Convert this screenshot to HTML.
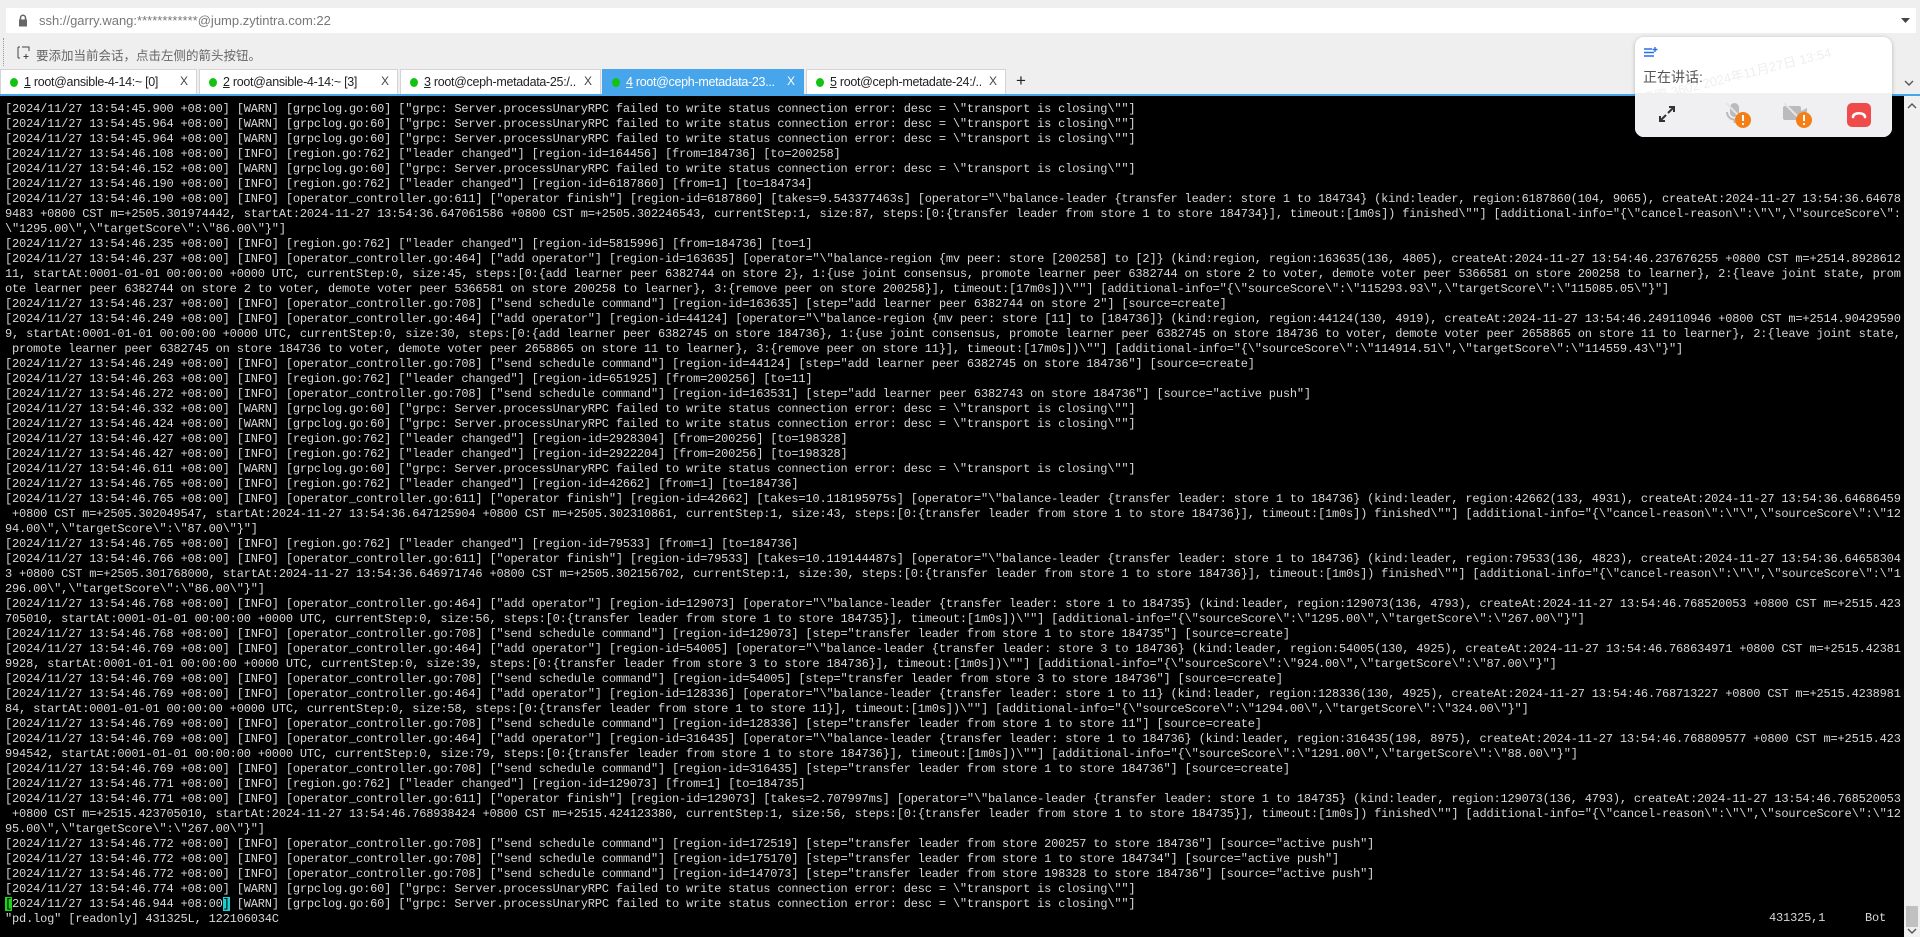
<!DOCTYPE html>
<html><head><meta charset="utf-8">
<style>
*{margin:0;padding:0;box-sizing:border-box}
body{width:1920px;height:937px;overflow:hidden;background:#efefef;font-family:"Liberation Sans","Noto Sans CJK SC",sans-serif;position:relative}
.addr{position:absolute;left:6px;top:8px;width:1910px;height:25px;background:#fff}
.addr .t{position:absolute;left:33px;top:5px;font-size:13px;color:#777}
.hint{position:absolute;left:36px;top:45px;font-size:12.5px;color:#666}
.tabs{position:absolute;left:0;top:69px;height:25px;width:1920px}
.tab{position:absolute;top:0;height:25px;background:#fff;border:1px solid #d4d4d4;border-bottom:none;font-size:12.5px;color:#222}
.tab .d{position:absolute;left:9px;top:8px;width:8px;height:9px;border-radius:50%;background:#12c312}
.tab .l{position:absolute;left:23px;right:24px;top:5px;white-space:nowrap;overflow:hidden;letter-spacing:-0.3px}
.tab .l u{text-decoration:underline}
.tab .x{position:absolute;right:8px;top:4px;font-size:12px;color:#444}
.tab.a{background:#47a5ec;border-color:#47a5ec;color:#fff}
.tab.a .x{color:#fff}
.bl{position:absolute;left:0;top:94px;width:1920px;height:2px;background:#47a5ec}
.term{position:absolute;left:0;top:96px;width:1904px;height:841px;background:#000;overflow:hidden}
.lines{position:absolute;left:5px;top:5.5px;font-family:"Liberation Mono",monospace;font-size:12px;letter-spacing:-0.18px;line-height:15px;color:#d8d8d8;white-space:pre}
.sb{position:absolute;left:1904px;top:96px;width:16px;height:841px;background:#f0f0f0}
.pop{position:absolute;left:1635px;top:37px;width:257px;height:100px;background:#fff;border-radius:9px;box-shadow:0 1px 4px rgba(0,0,0,.25);overflow:hidden}
.pop .bot{position:absolute;left:0;top:56px;width:257px;height:44px;background:#f0f0f2}
.cur{background:#1bd41b;color:#000}
.cy{background:#1ccfcf;color:#000}
</style></head><body>
<div class="addr">
<svg style="position:absolute;left:12px;top:6px" width="10" height="13" viewBox="0 0 10 13"><rect x="1" y="5.5" width="8" height="7" fill="#666"/><path d="M2.5 6V3.8a2.5 2.5 0 0 1 5 0V6" stroke="#666" stroke-width="1.5" fill="none"/></svg>
<div class="t">ssh://garry.wang:************@jump.zytintra.com:22</div>
<svg style="position:absolute;right:6px;top:10px" width="9" height="6"><path d="M0 0h9L4.5 5z" fill="#444"/></svg>
</div>
<div style="position:absolute;left:3px;top:38px;height:28px;border-left:1px dotted #999"></div>
<svg style="position:absolute;left:17px;top:46px" width="14" height="14" viewBox="0 0 14 14"><path d="M1 1v11M1 1h2M1 12h2M5 1h7v4" stroke="#444" fill="none"/><path d="M9 8v5M6.5 10.5h5" stroke="#444" fill="none"/></svg>
<div class="hint">要添加当前会话，点击左侧的箭头按钮。</div>
<div class="tabs">
<div class="tab" style="left:0;width:197px"><span class="d"></span><span class="l"><u>1</u> root@ansible-4-14:~ [0]</span><span class="x">X</span></div>
<div class="tab" style="left:199px;width:199px"><span class="d"></span><span class="l"><u>2</u> root@ansible-4-14:~ [3]</span><span class="x">X</span></div>
<div class="tab" style="left:400px;width:201px"><span class="d"></span><span class="l"><u>3</u> root@ceph-metadata-25:/...</span><span class="x">X</span></div>
<div class="tab a" style="left:602px;width:202px"><span class="d"></span><span class="l"><u>4</u> root@ceph-metadata-23...</span><span class="x">X</span></div>
<div class="tab" style="left:806px;width:200px"><span class="d"></span><span class="l"><u>5</u> root@ceph-metadate-24:/...</span><span class="x">X</span></div>
<div style="position:absolute;left:1016px;top:2px;font-size:17px;color:#222">+</div>
<svg style="position:absolute;left:1904px;top:11px" width="10" height="6"><path d="M1 1l4 4 4-4" stroke="#555" stroke-width="1.4" fill="none"/></svg>
</div>
<div class="bl"></div>
<div class="term"><div class="lines">[2024/11/27 13:54:45.900 +08:00] [WARN] [grpclog.go:60] ["grpc: Server.processUnaryRPC failed to write status connection error: desc = \"transport is closing\""]
[2024/11/27 13:54:45.964 +08:00] [WARN] [grpclog.go:60] ["grpc: Server.processUnaryRPC failed to write status connection error: desc = \"transport is closing\""]
[2024/11/27 13:54:45.964 +08:00] [WARN] [grpclog.go:60] ["grpc: Server.processUnaryRPC failed to write status connection error: desc = \"transport is closing\""]
[2024/11/27 13:54:46.108 +08:00] [INFO] [region.go:762] ["leader changed"] [region-id=164456] [from=184736] [to=200258]
[2024/11/27 13:54:46.152 +08:00] [WARN] [grpclog.go:60] ["grpc: Server.processUnaryRPC failed to write status connection error: desc = \"transport is closing\""]
[2024/11/27 13:54:46.190 +08:00] [INFO] [region.go:762] ["leader changed"] [region-id=6187860] [from=1] [to=184734]
[2024/11/27 13:54:46.190 +08:00] [INFO] [operator_controller.go:611] ["operator finish"] [region-id=6187860] [takes=9.543377463s] [operator="\"balance-leader {transfer leader: store 1 to 184734} (kind:leader, region:6187860(104, 9065), createAt:2024-11-27 13:54:36.64678
9483 +0800 CST m=+2505.301974442, startAt:2024-11-27 13:54:36.647061586 +0800 CST m=+2505.302246543, currentStep:1, size:87, steps:[0:{transfer leader from store 1 to store 184734}], timeout:[1m0s]) finished\""] [additional-info="{\"cancel-reason\":\"\",\"sourceScore\":
\"1295.00\",\"targetScore\":\"86.00\"}"]
[2024/11/27 13:54:46.235 +08:00] [INFO] [region.go:762] ["leader changed"] [region-id=5815996] [from=184736] [to=1]
[2024/11/27 13:54:46.237 +08:00] [INFO] [operator_controller.go:464] ["add operator"] [region-id=163635] [operator="\"balance-region {mv peer: store [200258] to [2]} (kind:region, region:163635(136, 4805), createAt:2024-11-27 13:54:46.237676255 +0800 CST m=+2514.8928612
11, startAt:0001-01-01 00:00:00 +0000 UTC, currentStep:0, size:45, steps:[0:{add learner peer 6382744 on store 2}, 1:{use joint consensus, promote learner peer 6382744 on store 2 to voter, demote voter peer 5366581 on store 200258 to learner}, 2:{leave joint state, prom
ote learner peer 6382744 on store 2 to voter, demote voter peer 5366581 on store 200258 to learner}, 3:{remove peer on store 200258}], timeout:[17m0s])\""] [additional-info="{\"sourceScore\":\"115293.93\",\"targetScore\":\"115085.05\"}"]
[2024/11/27 13:54:46.237 +08:00] [INFO] [operator_controller.go:708] ["send schedule command"] [region-id=163635] [step="add learner peer 6382744 on store 2"] [source=create]
[2024/11/27 13:54:46.249 +08:00] [INFO] [operator_controller.go:464] ["add operator"] [region-id=44124] [operator="\"balance-region {mv peer: store [11] to [184736]} (kind:region, region:44124(130, 4919), createAt:2024-11-27 13:54:46.249110946 +0800 CST m=+2514.90429590
9, startAt:0001-01-01 00:00:00 +0000 UTC, currentStep:0, size:30, steps:[0:{add learner peer 6382745 on store 184736}, 1:{use joint consensus, promote learner peer 6382745 on store 184736 to voter, demote voter peer 2658865 on store 11 to learner}, 2:{leave joint state,
 promote learner peer 6382745 on store 184736 to voter, demote voter peer 2658865 on store 11 to learner}, 3:{remove peer on store 11}], timeout:[17m0s])\""] [additional-info="{\"sourceScore\":\"114914.51\",\"targetScore\":\"114559.43\"}"]
[2024/11/27 13:54:46.249 +08:00] [INFO] [operator_controller.go:708] ["send schedule command"] [region-id=44124] [step="add learner peer 6382745 on store 184736"] [source=create]
[2024/11/27 13:54:46.263 +08:00] [INFO] [region.go:762] ["leader changed"] [region-id=651925] [from=200256] [to=11]
[2024/11/27 13:54:46.272 +08:00] [INFO] [operator_controller.go:708] ["send schedule command"] [region-id=163531] [step="add learner peer 6382743 on store 184736"] [source="active push"]
[2024/11/27 13:54:46.332 +08:00] [WARN] [grpclog.go:60] ["grpc: Server.processUnaryRPC failed to write status connection error: desc = \"transport is closing\""]
[2024/11/27 13:54:46.424 +08:00] [WARN] [grpclog.go:60] ["grpc: Server.processUnaryRPC failed to write status connection error: desc = \"transport is closing\""]
[2024/11/27 13:54:46.427 +08:00] [INFO] [region.go:762] ["leader changed"] [region-id=2928304] [from=200256] [to=198328]
[2024/11/27 13:54:46.427 +08:00] [INFO] [region.go:762] ["leader changed"] [region-id=2922204] [from=200256] [to=198328]
[2024/11/27 13:54:46.611 +08:00] [WARN] [grpclog.go:60] ["grpc: Server.processUnaryRPC failed to write status connection error: desc = \"transport is closing\""]
[2024/11/27 13:54:46.765 +08:00] [INFO] [region.go:762] ["leader changed"] [region-id=42662] [from=1] [to=184736]
[2024/11/27 13:54:46.765 +08:00] [INFO] [operator_controller.go:611] ["operator finish"] [region-id=42662] [takes=10.118195975s] [operator="\"balance-leader {transfer leader: store 1 to 184736} (kind:leader, region:42662(133, 4931), createAt:2024-11-27 13:54:36.64686459
 +0800 CST m=+2505.302049547, startAt:2024-11-27 13:54:36.647125904 +0800 CST m=+2505.302310861, currentStep:1, size:43, steps:[0:{transfer leader from store 1 to store 184736}], timeout:[1m0s]) finished\""] [additional-info="{\"cancel-reason\":\"\",\"sourceScore\":\"12
94.00\",\"targetScore\":\"87.00\"}"]
[2024/11/27 13:54:46.765 +08:00] [INFO] [region.go:762] ["leader changed"] [region-id=79533] [from=1] [to=184736]
[2024/11/27 13:54:46.766 +08:00] [INFO] [operator_controller.go:611] ["operator finish"] [region-id=79533] [takes=10.119144487s] [operator="\"balance-leader {transfer leader: store 1 to 184736} (kind:leader, region:79533(136, 4823), createAt:2024-11-27 13:54:36.64658304
3 +0800 CST m=+2505.301768000, startAt:2024-11-27 13:54:36.646971746 +0800 CST m=+2505.302156702, currentStep:1, size:30, steps:[0:{transfer leader from store 1 to store 184736}], timeout:[1m0s]) finished\""] [additional-info="{\"cancel-reason\":\"\",\"sourceScore\":\"1
296.00\",\"targetScore\":\"86.00\"}"]
[2024/11/27 13:54:46.768 +08:00] [INFO] [operator_controller.go:464] ["add operator"] [region-id=129073] [operator="\"balance-leader {transfer leader: store 1 to 184735} (kind:leader, region:129073(136, 4793), createAt:2024-11-27 13:54:46.768520053 +0800 CST m=+2515.423
705010, startAt:0001-01-01 00:00:00 +0000 UTC, currentStep:0, size:56, steps:[0:{transfer leader from store 1 to store 184735}], timeout:[1m0s])\""] [additional-info="{\"sourceScore\":\"1295.00\",\"targetScore\":\"267.00\"}"]
[2024/11/27 13:54:46.768 +08:00] [INFO] [operator_controller.go:708] ["send schedule command"] [region-id=129073] [step="transfer leader from store 1 to store 184735"] [source=create]
[2024/11/27 13:54:46.769 +08:00] [INFO] [operator_controller.go:464] ["add operator"] [region-id=54005] [operator="\"balance-leader {transfer leader: store 3 to 184736} (kind:leader, region:54005(130, 4925), createAt:2024-11-27 13:54:46.768634971 +0800 CST m=+2515.42381
9928, startAt:0001-01-01 00:00:00 +0000 UTC, currentStep:0, size:39, steps:[0:{transfer leader from store 3 to store 184736}], timeout:[1m0s])\""] [additional-info="{\"sourceScore\":\"924.00\",\"targetScore\":\"87.00\"}"]
[2024/11/27 13:54:46.769 +08:00] [INFO] [operator_controller.go:708] ["send schedule command"] [region-id=54005] [step="transfer leader from store 3 to store 184736"] [source=create]
[2024/11/27 13:54:46.769 +08:00] [INFO] [operator_controller.go:464] ["add operator"] [region-id=128336] [operator="\"balance-leader {transfer leader: store 1 to 11} (kind:leader, region:128336(130, 4925), createAt:2024-11-27 13:54:46.768713227 +0800 CST m=+2515.4238981
84, startAt:0001-01-01 00:00:00 +0000 UTC, currentStep:0, size:58, steps:[0:{transfer leader from store 1 to store 11}], timeout:[1m0s])\""] [additional-info="{\"sourceScore\":\"1294.00\",\"targetScore\":\"324.00\"}"]
[2024/11/27 13:54:46.769 +08:00] [INFO] [operator_controller.go:708] ["send schedule command"] [region-id=128336] [step="transfer leader from store 1 to store 11"] [source=create]
[2024/11/27 13:54:46.769 +08:00] [INFO] [operator_controller.go:464] ["add operator"] [region-id=316435] [operator="\"balance-leader {transfer leader: store 1 to 184736} (kind:leader, region:316435(198, 8975), createAt:2024-11-27 13:54:46.768809577 +0800 CST m=+2515.423
994542, startAt:0001-01-01 00:00:00 +0000 UTC, currentStep:0, size:79, steps:[0:{transfer leader from store 1 to store 184736}], timeout:[1m0s])\""] [additional-info="{\"sourceScore\":\"1291.00\",\"targetScore\":\"88.00\"}"]
[2024/11/27 13:54:46.769 +08:00] [INFO] [operator_controller.go:708] ["send schedule command"] [region-id=316435] [step="transfer leader from store 1 to store 184736"] [source=create]
[2024/11/27 13:54:46.771 +08:00] [INFO] [region.go:762] ["leader changed"] [region-id=129073] [from=1] [to=184735]
[2024/11/27 13:54:46.771 +08:00] [INFO] [operator_controller.go:611] ["operator finish"] [region-id=129073] [takes=2.707997ms] [operator="\"balance-leader {transfer leader: store 1 to 184735} (kind:leader, region:129073(136, 4793), createAt:2024-11-27 13:54:46.768520053
 +0800 CST m=+2515.423705010, startAt:2024-11-27 13:54:46.768938424 +0800 CST m=+2515.424123380, currentStep:1, size:56, steps:[0:{transfer leader from store 1 to store 184735}], timeout:[1m0s]) finished\""] [additional-info="{\"cancel-reason\":\"\",\"sourceScore\":\"12
95.00\",\"targetScore\":\"267.00\"}"]
[2024/11/27 13:54:46.772 +08:00] [INFO] [operator_controller.go:708] ["send schedule command"] [region-id=172519] [step="transfer leader from store 200257 to store 184736"] [source="active push"]
[2024/11/27 13:54:46.772 +08:00] [INFO] [operator_controller.go:708] ["send schedule command"] [region-id=175170] [step="transfer leader from store 1 to store 184734"] [source="active push"]
[2024/11/27 13:54:46.772 +08:00] [INFO] [operator_controller.go:708] ["send schedule command"] [region-id=147073] [step="transfer leader from store 198328 to store 184736"] [source="active push"]
[2024/11/27 13:54:46.774 +08:00] [WARN] [grpclog.go:60] ["grpc: Server.processUnaryRPC failed to write status connection error: desc = \"transport is closing\""]
<span class="cur">[</span>2024/11/27 13:54:46.944 +08:00<span class="cy">]</span> [WARN] [grpclog.go:60] ["grpc: Server.processUnaryRPC failed to write status connection error: desc = \"transport is closing\""]
"pd.log" [readonly] 431325L, 122106034C</div>
<div style="position:absolute;left:1769px;top:815px;font-family:'Liberation Mono',monospace;font-size:12px;letter-spacing:-0.18px;color:#d8d8d8;white-space:pre">431325,1</div>
<div style="position:absolute;left:1865px;top:815px;font-family:'Liberation Mono',monospace;font-size:12px;letter-spacing:-0.18px;color:#d8d8d8">Bot</div>
</div>
<div class="sb">
<svg style="position:absolute;left:3px;top:7px" width="10" height="6"><path d="M1 5l4-4 4 4" stroke="#555" stroke-width="1.4" fill="none"/></svg>
<div style="position:absolute;left:2px;top:810px;width:12px;height:21px;background:#c1c1c1"></div>
<svg style="position:absolute;left:3px;top:832px" width="10" height="6"><path d="M1 1l4 4 4-4" stroke="#555" stroke-width="1.4" fill="none"/></svg>
</div>
<div class="pop">
<svg style="position:absolute;left:9px;top:10px" width="14" height="11" viewBox="0 0 14 11"><path d="M0 2h8M0 5.5h10M0 9h10" stroke="#2a6ee8" stroke-width="1.6"/><path d="M11 0v5M8.5 2.5h5" stroke="#2a6ee8" stroke-width="1.4"/></svg>
<div style="position:absolute;left:8px;top:30px;font-size:14px;color:#555">正在讲话:</div>
<div style="position:absolute;left:5px;top:52px;font-size:13px;color:rgba(0,0,0,.07);transform:rotate(-14deg);transform-origin:left top;white-space:nowrap">王鹏 3602 2024年11月27日 13:54</div>
<div class="bot"></div>
<svg style="position:absolute;left:23px;top:68px" width="18" height="18" viewBox="0 0 18 18"><path d="M10 8l6-6M11 2h5v5M8 10l-6 6M2 11v5h5" stroke="#333" stroke-width="2" fill="none"/></svg>
<svg style="position:absolute;left:90px;top:65px" width="26" height="26" viewBox="0 0 26 26"><rect x="5" y="1" width="9" height="14" rx="4.5" fill="#bbb"/><path d="M2 10a7.5 7.5 0 0 0 15 0M9.5 17v4" stroke="#bbb" stroke-width="2" fill="none"/><path d="M1 1l18 18" stroke="#e5e5e5" stroke-width="2"/><circle cx="18" cy="18" r="8" fill="#f57f17"/><path d="M18 13v6" stroke="#fff" stroke-width="2"/><circle cx="18" cy="22" r="1.1" fill="#fff"/></svg>
<svg style="position:absolute;left:147px;top:65px" width="34" height="26" viewBox="0 0 34 26"><rect x="1" y="4" width="18" height="14" rx="2" fill="#bbb"/><path d="M19 9l6-3v10l-6-3z" fill="#bbb"/><path d="M2 1l18 18" stroke="#e5e5e5" stroke-width="2"/><circle cx="22" cy="18" r="8" fill="#f57f17"/><path d="M22 13v6" stroke="#fff" stroke-width="2"/><circle cx="22" cy="22" r="1.1" fill="#fff"/></svg>
<div style="position:absolute;left:212px;top:66px;width:24px;height:24px;border-radius:5px;background:#f04b4b"></div>
<svg style="position:absolute;left:216px;top:73px" width="16" height="9" viewBox="0 0 16 9"><path d="M2 7C2 2 14 2 14 7" stroke="#fff" stroke-width="2.6" fill="none" stroke-linecap="round"/></svg>
</div>
</body></html>
